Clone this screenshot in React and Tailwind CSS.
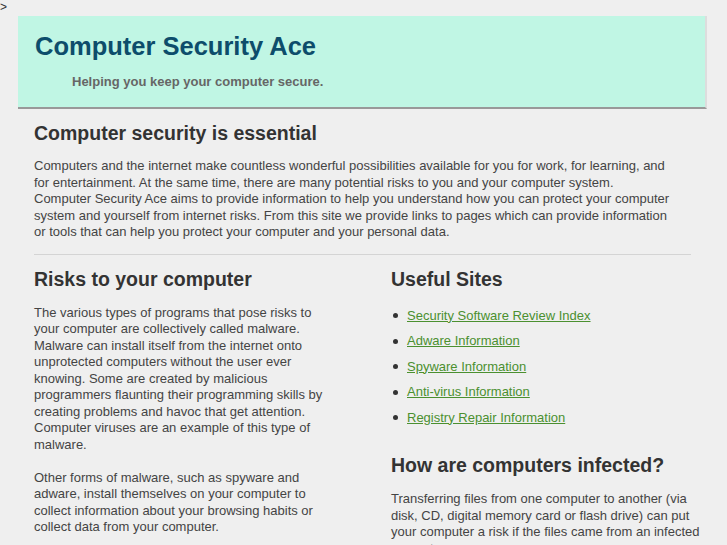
import React from 'react';

const links = [
  'Security Software Review Index',
  'Adware Information',
  'Spyware Information',
  'Anti-virus Information',
  'Registry Repair Information',
];

const App = () => {
  return (
    <div
      className="min-h-[545px] bg-[#efefef] text-[#444] text-[13px] leading-[16.5px]"
      style={{ fontFamily: '"Liberation Sans", Arial, sans-serif' }}
    >
      <div className="h-4 text-[12px] leading-[14px] text-[#333]">&gt;</div>
      <div className="ml-[18px] w-[689px]">
        <div className="bg-[#c0f6e4] border-b-2 border-r-2 border-b-[#999] border-r-[#ddd] h-[93px] pl-[17px] pt-[15px]">
          <h1 className="text-[25.5px] leading-[30px] font-bold text-[#0d4d6b]">
            Computer Security Ace
          </h1>
          <p className="mt-[13px] ml-[37px] font-bold text-[#666]">
            Helping you keep your computer secure.
          </p>
        </div>

        <div className="pl-[16px] pt-[12px]">
          <h2 className="text-[19.5px] leading-[24px] font-bold text-[#333]">
            Computer security is essential
          </h2>
          <p className="mt-[13px] w-[640px]">
            Computers and the internet make countless wonderful possibilities available for you for work, for learning, and for
            entertainment. At the same time, there are many potential risks to you and your computer system. Computer Security
            Ace aims to provide information to help you understand how you can protect your computer system and yourself from
            internet risks. From this site we provide links to pages which can provide information or tools that can help you
            protect your computer and your personal data.
          </p>
          <div className="mt-[13px] h-px w-[657px] bg-[#d4d4d4]" />

          <div className="flex pt-[12px]">
            <div className="w-[300px] shrink-0">
              <h2 className="text-[19.5px] leading-[24px] font-bold text-[#333]">Risks to your computer</h2>
              <p className="mt-[14px]">
                The various types of programs that pose risks to your computer are collectively called malware. Malware can
                install itself from the internet onto unprotected computers without the user ever knowing. Some are created by
                malicious programmers flaunting their programming skills by creating problems and havoc that get attention.
                Computer viruses are an example of this type of malware.
              </p>
              <p className="mt-[16.5px]">
                Other forms of malware, such as spyware and adware, install themselves on your computer to collect information
                about your browsing habits or collect data from your computer.
              </p>
            </div>
            <div className="ml-[57px] w-[314px] shrink-0">
              <h2 className="text-[19.5px] leading-[24px] font-bold text-[#333]">Useful Sites</h2>
              <ul className="mt-[17px] flex flex-col gap-[9px]">
                {links.map((l) => (
                  <li key={l} className="flex items-center">
                    <span className="w-[5px] h-[5px] rounded-full bg-[#333] ml-[2px] mr-[9px]" />
                    <a href="#" className="text-[#4b9030] underline">
                      {l}
                    </a>
                  </li>
                ))}
              </ul>
              <h2 className="mt-[27px] text-[19.5px] leading-[24px] font-bold text-[#333]">
                How are computers infected?
              </h2>
              <p className="mt-[14px]">
                Transferring files from one computer to another (via disk, CD, digital memory card or flash drive) can put your
                computer a risk if the files came from an infected computer.
              </p>
            </div>
          </div>
        </div>
      </div>
    </div>
  );
};

export default App;
